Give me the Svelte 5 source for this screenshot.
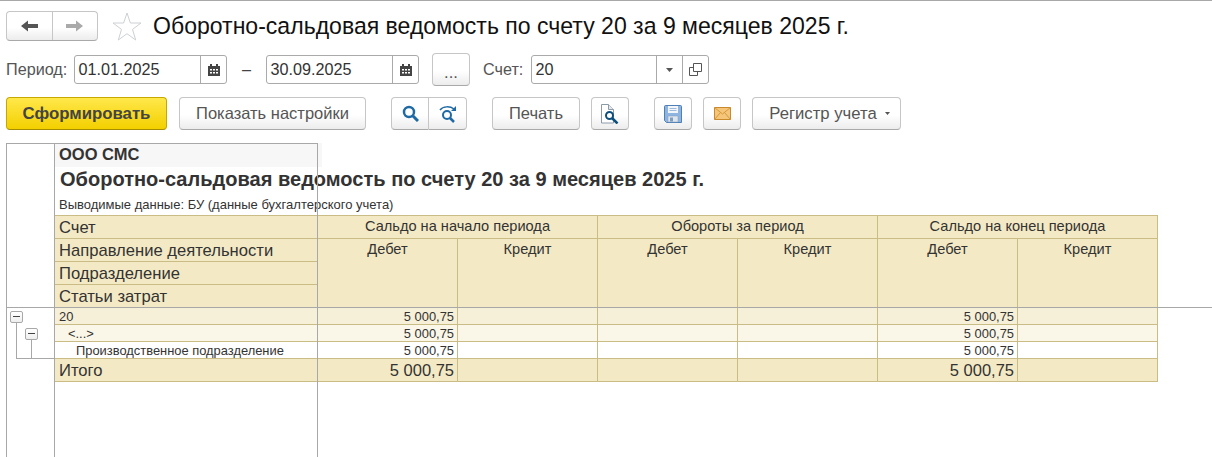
<script>
  const periods = ['Сальдо на начало периода', 'Обороты за период', 'Сальдо на конец периода'];
  const rows = [
    { name: '20', cls: 'l0', vals: ['5 000,75', '', '', '', '5 000,75', ''] },
    { name: '<...>', cls: 'l1', vals: ['5 000,75', '', '', '', '5 000,75', ''] },
    { name: 'Производственное подразделение', cls: 'l2', vals: ['5 000,75', '', '', '', '5 000,75', ''] }
  ];
  const total = ['5 000,75', '', '', '', '5 000,75', ''];
</script>

<div class="page">
  <header class="titlebar">
    <div class="nav">
      <button class="navbtn" aria-label="Назад">
        <svg width="19" height="14" viewBox="0 0 19 14"><path d="M1 7l7-5.500v3.500h10v4h-10v3.500z" fill="#555"/></svg>
      </button>
      <button class="navbtn" aria-label="Вперед">
        <svg width="19" height="14" viewBox="0 0 19 14"><path d="M18 7l-7-5.500v3.500h-10v4h10v3.500z" fill="#aaa"/></svg>
      </button>
    </div>
    <svg class="star" width="30" height="29" viewBox="0 0 30 29"><path d="M15 1l3.400 10h10.600l-8.500 6.400 3.200 10.600-8.700-6.300-8.700 6.300 3.200-10.600-8.500-6.400h10.600z" fill="#fff" stroke="#cdd0d4"/></svg>
    <h1>Оборотно-сальдовая ведомость по счету 20 за 9 месяцев 2025 г.</h1>
  </header>

  <div class="form">
    <span class="lbl per">Период:</span>
    <div class="field date">
      <span class="val">01.01.2025</span>
      <span class="fbtn"><svg width="14" height="14" viewBox="0 0 14 14"><path d="M1 3h12v10h-12z" fill="#444"/><path d="M3 1h2v3h-2zM9 1h2v3h-2z" fill="#444"/><path d="M3 6h2v1.500h-2zM6 6h2v1.500h-2zM9 6h2v1.500h-2zM3 9h2v1.500h-2zM6 9h2v1.500h-2zM9 9h2v1.500h-2z" fill="#fff"/></svg></span>
    </div>
    <span class="dash">–</span>
    <div class="field date">
      <span class="val">30.09.2025</span>
      <span class="fbtn"><svg width="14" height="14" viewBox="0 0 14 14"><path d="M1 3h12v10h-12z" fill="#444"/><path d="M3 1h2v3h-2zM9 1h2v3h-2z" fill="#444"/><path d="M3 6h2v1.500h-2zM6 6h2v1.500h-2zM9 6h2v1.500h-2zM3 9h2v1.500h-2zM6 9h2v1.500h-2zM9 9h2v1.500h-2z" fill="#fff"/></svg></span>
    </div>
    <button class="btn dots">...</button>
    <span class="lbl acc">Счет:</span>
    <div class="field acct">
      <span class="val">20</span>
      <span class="fbtn"><svg width="7" height="4" viewBox="0 0 7 4"><path d="M0 0h7l-3.500 4z" fill="#555"/></svg></span>
      <span class="fbtn"><svg width="13" height="13" viewBox="0 0 13 13" fill="none" stroke="#555"><path d="M4.500 .5h8v8h-8z"/><path d="M4.500 4.500h-4v8h8v-4"/></svg></span>
    </div>
  </div>

  <div class="toolbar">
    <button class="btn primary">Сформировать</button>
    <button class="btn settings">Показать настройки</button>
    <div class="group">
      <button class="btn ic" aria-label="Найти">
        <svg width="17" height="17" viewBox="0 0 17 17" fill="none" stroke="#1f6aa5" stroke-width="2.500"><circle cx="7" cy="7" r="5"/><path d="M11 11l5 5" stroke-width="3"/></svg>
      </button>
      <button class="btn ic" aria-label="Найти далее">
        <svg width="20" height="18" viewBox="0 0 20 18" fill="none" stroke="#1f6aa5" stroke-width="2"><circle cx="9" cy="10" r="4"/><path d="M12 13l4 4" stroke-width="2.500"/><path d="M2 5c3-4 10-4 14-1" stroke-width="1.500"/><path d="M18 1v5h-5z" fill="#1f6aa5" stroke="none"/></svg>
      </button>
    </div>
    <button class="btn print">Печать</button>
    <button class="btn ic solo" aria-label="Просмотр">
      <svg width="18" height="20" viewBox="0 0 18 20"><path d="M.5.500h7l5 5v13.500h-12z" fill="#fff" stroke="#8c9aa8"/><path d="M7.500.5v5h5" fill="#e4e8ec" stroke="#8c9aa8"/><circle cx="8.500" cy="11.500" r="3.500" fill="#fff" stroke="#0d4f7c" stroke-width="2"/><path d="M11 14l5.500 5.500" stroke="#0d4f7c" stroke-width="2.500"/></svg>
    </button>
    <button class="btn ic solo save" aria-label="Сохранить">
      <svg width="18" height="18" viewBox="0 0 18 18"><path d="M.5 1.500q0-1 1-1h15q1 0 1 1v16h-15l-2-2z" fill="#8fb4e0" stroke="#4e7fb5"/><path d="M4 1h10v7h-10z" fill="#f2f6fb"/><path d="M5.500 3.500h7M5.500 5.500h7" stroke="#9dbbdc"/><path d="M4 11h10v6h-10z" fill="#dfe5ec" stroke="#7f9dbd" stroke-width=".5"/><path d="M6 12.500h3v4h-3z" fill="#7f9dbd"/></svg>
    </button>
    <button class="btn ic solo mail" aria-label="Почта">
      <svg width="17" height="13" viewBox="0 0 17 13"><path d="M.5.500h16v12h-16z" fill="#f5c67a" stroke="#c98a2e"/><path d="M.5.500l8 6.500 8-6.500M.5 12.500l6-7M16.500 12.500l-6-7" fill="none" stroke="#d4983c"/></svg>
    </button>
    <button class="btn reg">Регистр учета<svg width="5" height="3" viewBox="0 0 5 3"><path d="M0 0h5l-2.500 3z" fill="#555"/></svg></button>
  </div>

  <section class="report">
    <div class="gutter">
      <span class="tree t1"></span>
      <span class="tree t2"></span>
      <span class="tog a"></span>
      <span class="tog b"></span>
    </div>
    <div class="sheet">
      <div class="org">ООО СМС</div>
      <div class="rtitle">Оборотно-сальдовая ведомость по счету 20 за 9 месяцев 2025 г.</div>
      <div class="sub">Выводимые данные: БУ (данные бухгалтерского учета)</div>
      <div class="grid">
        <div class="c hd left">Счет</div>
        {#each periods as p}<div class="c hd ctr span2">{p}</div>{/each}
        <div class="c hd left">Направление деятельности</div>
        {#each Array(6) as _, i}
          <div class="c hd ctr tall" style="grid-column: {i + 2}">{i % 2 ? 'Кредит' : 'Дебет'}</div>
        {/each}
        <div class="c hd left">Подразделение</div>
        <div class="c hd left">Статьи затрат</div>
        {#each rows as r}
          <div class="c sm name {r.cls}">{r.name}</div>
          {#each r.vals as v}<div class="c sm num {r.cls}">{v}</div>{/each}
        {/each}
        <div class="c hd left">Итого</div>
        {#each total as v}<div class="c hd num big">{v}</div>{/each}
      </div>
    </div>
    <div class="line v"></div>
    <div class="line h"></div>
  </section>
</div>

<style>
  :global(body) { margin: 0; background: #fff; }
  .page {
    width: 1212px; height: 457px; overflow: hidden; box-sizing: border-box;
    border-top: 1px solid #a8a8a8;
    font-family: "Liberation Sans", Arial, sans-serif; color: #333;
    padding: 0 0 0 6px; position: relative;
  }
  button { font: inherit; padding: 0; margin: 0; }
  .titlebar { display: flex; align-items: center; height: 30px; margin-top: 10px; }
  .nav { display: flex; width: 92px; height: 30px; box-sizing: border-box; border: 1px solid #c6c6c6; border-bottom-color: #a9a9a9; border-radius: 4px; background: linear-gradient(#fff 55%, #ececec); overflow: hidden; }
  .navbtn { flex: 1; border: 0; background: none; display: flex; align-items: center; justify-content: center; }
  .navbtn + .navbtn { border-left: 1px solid #c6c6c6; }
  .star { margin-left: 14px; }
  h1 { font-size: 23.050px; font-weight: 400; margin: 0 0 0 11px; color: #111; white-space: nowrap; line-height: 30px; }

  .form { display: flex; align-items: center; height: 33px; margin-top: 12px; font-size: 16.2px; }
  .lbl { color: #555; flex: none; }
  .per { width: 61px; }
  .field { box-sizing: border-box; height: 29px; display: flex; align-items: center; border: 1px solid #aaa; border-radius: 3px; background: #fff; color: #333; flex: none; }
  .val { flex: 1; padding-left: 3.500px; }
  .fbtn { width: 26px; height: 100%; box-sizing: border-box; border-left: 1px solid #aaa; display: flex; align-items: center; justify-content: center; }
  .date { width: 153px; margin-left: 7px; }
  .dash { color: #444; margin: 0 1px 0 15px; width: 16px; flex: none; box-sizing: border-box; }
  .dots { width: 38px; height: 33px; margin-left: 13px; padding-top: 6px; flex: none; }
  .acc { margin-left: 13px; width: 41px; }
  .acct { width: 178px; margin-left: 7px; }

  .btn { box-sizing: border-box; height: 33px; border: 1px solid #c6c6c6; border-bottom-color: #a9a9a9; border-radius: 4px; background: linear-gradient(#fff 55%, #ececec); color: #555; font-size: 16.500px; display: inline-flex; align-items: center; justify-content: center; flex: none; }
  .toolbar { display: flex; align-items: center; height: 33px; margin-top: 11px; }
  .primary { width: 161px; font-size: 16.800px; font-weight: 700; color: #444; background: linear-gradient(#ffe84a, #f3d000); border-color: #c5a800; border-bottom-color: #a58c00; }
  .settings { width: 187px; margin-left: 12px; }
  .group { display: flex; margin-left: 25px; }
  .ic { width: 38px; }
  .group .ic:first-child { border-radius: 4px 0 0 4px; }
  .group .ic:last-child { border-radius: 0 4px 4px 0; border-left: 0; }
  .print { width: 88px; margin-left: 25px; }
  .solo { margin-left: 11px; }
  .save { margin-left: 25px; }
  .mail { margin-left: 11px; }
  .reg { width: 149px; margin-left: 11px; gap: 8px; padding-left: 6px; font-size: 16.700px; }

  .report { position: absolute; left: 6px; top: 142px; right: 0; bottom: 0; display: flex; }
  .gutter { position: relative; width: 49px; box-sizing: border-box; border-left: 1px solid #a8a8a8; border-right: 1px solid #a8a8a8; flex: none; }
  .sheet { width: 1103px; flex: none; }
  .org { width: 267px; height: 24px; line-height: 23px; background: #f7f7f7; font-weight: 700; font-size: 16.500px; padding-left: 4px; box-sizing: border-box; white-space: nowrap; }
  .rtitle { height: 24px; line-height: 24px; font-weight: 700; font-size: 20.050px; padding-left: 5px; white-space: nowrap; }
  .sub { height: 24px; line-height: 28px; font-size: 13px; padding-left: 4px; white-space: nowrap; }
  .grid { display: grid; grid-template-columns: 263px repeat(6, 140px); grid-template-rows: repeat(4, 23px) repeat(3, 17px) 23px; width: 1103px; border-top: 1px solid #c9bc84; box-sizing: border-box; }
  .c { box-sizing: border-box; border-bottom: 1px solid #c9bc84; border-right: 1px solid #c9bc84; white-space: nowrap; color: #333; overflow: hidden; }
  .hd { background: #f3eac5; font-size: 15px; line-height: 22px; }
  .left { padding-left: 4px; font-size: 16.600px; line-height: 23.500px; }
  .ctr { text-align: center; font-size: 14.600px; }
  .span2 { grid-column: span 2; line-height: 21px; }
  .tall { grid-row: 2 / 5; line-height: 20px; }
  .sm { font-size: 12.900px; line-height: 17px; }
  .name { padding-left: 4px; }
  .num { text-align: right; padding-right: 3px; }
  .l0 { background: #f6f0d8; }
  .l1 { background: #faf7e9; }
  .l2 { background: #fff; }
  .name.l1 { padding-left: 13px; }
  .name.l2 { padding-left: 21px; }
  .big { font-size: 16.500px; line-height: 23px; }
  .line { position: absolute; background: #a8a8a8; pointer-events: none; }
  .line.v { left: 311px; top: 0; bottom: 0; width: 1px; }
  .line.h { left: 0; right: 0; top: 164px; height: 1px; }
  .report::before { content: ""; position: absolute; left: 0; top: 0; width: 312px; height: 1px; background: #a8a8a8; z-index: 1; }
  .tog { position: absolute; width: 13px; height: 12px; box-sizing: border-box; border: 1px solid #a8a8a8; border-radius: 2px; background: linear-gradient(#fff, #eee); }
  .tog::after { content: ""; position: absolute; left: 2px; right: 2px; top: 4px; height: 1px; background: #444; }
  .tog.a { left: 3px; top: 168px; }
  .tog.b { left: 18px; top: 185px; }
  .tree { position: absolute; border-left: 1px solid #a8a8a8; }
  .t1 { left: 9px; top: 180px; height: 36px; width: 38px; border-bottom: 1px solid #a8a8a8; box-sizing: border-box; }
  .t2 { left: 24px; top: 197px; height: 19px; }
</style>
